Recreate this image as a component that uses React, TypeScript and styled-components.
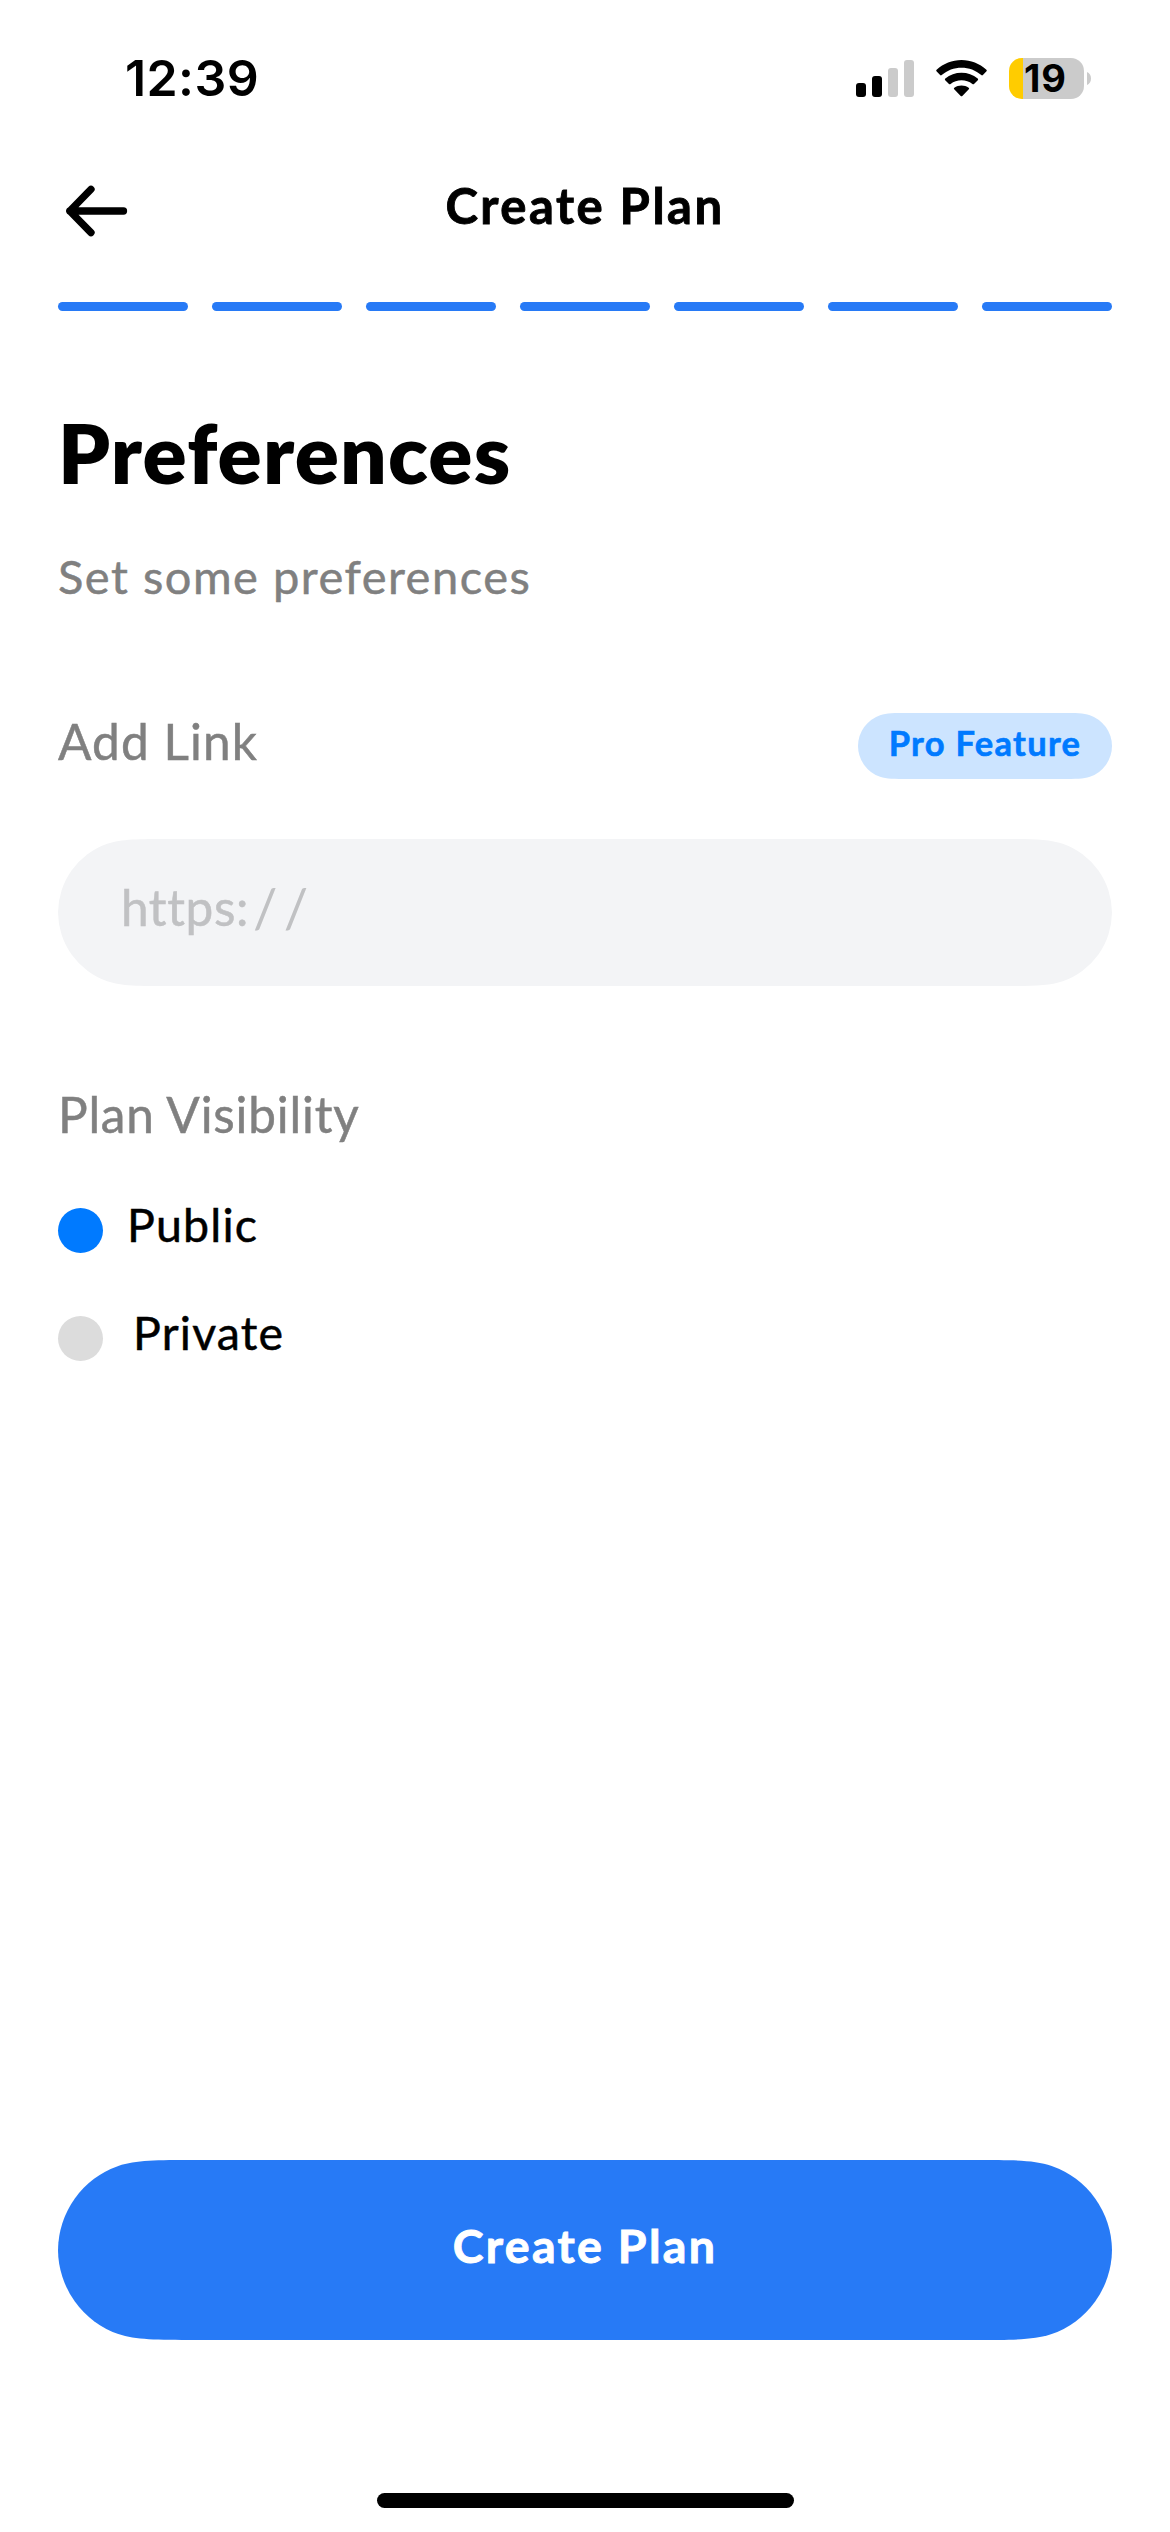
import React, { useState } from "react";
import styled, { createGlobalStyle } from "styled-components";

const BLUE = "#277AF6";
const SYSTEM_BLUE = "#007AFF";
const brandFont = `Lato, "Open Sans", sans-serif`;
const systemFont = `Inter, "Liberation Sans", sans-serif`;

/* Capsule outline with continuous (smoothed) corners. */
const capsule = (w: number, h: number) => {
  const r = h / 2;
  const a = 1.52866 * r;
  const b = 1.08849 * r;
  const c = 0.86841 * r;
  const d = 0.66993 * r;
  const e = 0.06549 * r;
  return `path("M${a} 0 L${w - a} 0 C${w - b} 0 ${w - c} 0 ${w - d} ${e} A${r} ${r} 0 0 1 ${w} ${r} A${r} ${r} 0 0 1 ${w - d} ${h - e} C${w - c} ${h} ${w - b} ${h} ${w - a} ${h} L${a} ${h} C${b} ${h} ${c} ${h} ${d} ${h - e} A${r} ${r} 0 0 1 0 ${r} A${r} ${r} 0 0 1 ${d} ${e} C${c} 0 ${b} 0 ${a} 0 Z")`;
};

const GlobalStyle = createGlobalStyle`
  *, *::before, *::after { box-sizing: border-box; }
  body { margin: 0; background: #fff; }
  button { border: 0; margin: 0; outline: 0; font: inherit; }
`;

const Screen = styled.main`
  width: 1170px;
  height: 2532px;
  display: flex;
  flex-direction: column;
  background: #fff;
  color: #000;
  font-family: ${brandFont};
`;

const StatusBar = styled.div`
  height: 156px;
  padding: 0 79px 0 125px;
  display: flex;
  align-items: center;
  justify-content: space-between;
  font-family: ${systemFont};
`;

const Clock = styled.time`
  font-size: 50px;
  font-weight: 600;
  line-height: 60px;
  letter-spacing: 0.4px;
`;

const StatusIcons = styled.div`
  height: 41px;
  display: flex;
  align-items: center;
  gap: 22px;
`;

const Battery = styled.div`
  display: flex;
  align-items: center;
  gap: 3px;
`;

const BatteryBody = styled.div`
  width: 75px;
  height: 41px;
  border-radius: 13px;
  padding-left: 15px;
  background: linear-gradient(to right, #ffcc00 14px, #cbcbcb 14px);
  font-size: 38px;
  font-weight: 700;
  line-height: 41px;
  letter-spacing: 0.8px;
`;

const NavBar = styled.header`
  height: 146px;
  padding: 19px 58px 0;
  display: grid;
  grid-template-columns: 80px 1fr 80px;
  align-items: start;
`;

const BackButton = styled.button`
  padding: 10px 0 0 7px;
  background: none;
  display: flex;
`;

const NavTitle = styled.div`
  font-size: 49px;
  font-weight: 700;
  line-height: 60px;
  letter-spacing: 2.5px;
  -webkit-text-stroke: 0.9px currentColor;
  text-align: center;
  white-space: nowrap;
`;

const Progress = styled.div`
  margin: 0 58px;
  display: grid;
  grid-template-columns: repeat(7, 1fr);
  gap: 24px;
`;

const Step = styled.span`
  height: 9px;
  border-radius: 4.5px;
  background: ${BLUE};
`;

const Content = styled.section`
  flex: 1;
  padding: 91px 58px 0;
  display: flex;
  flex-direction: column;
`;

const Title = styled.h1`
  margin: 0;
  font-size: 82px;
  font-weight: 800;
  line-height: 100px;
  letter-spacing: 1.2px;
`;

const Subtitle = styled.p`
  margin: 44px 0 0;
  color: #808080;
  font-size: 47px;
  line-height: 60px;
  letter-spacing: 1.5px;
  -webkit-text-stroke: 0.5px currentColor;
`;

const FieldHeader = styled.div`
  margin-top: 107px;
  height: 66px;
  display: flex;
  justify-content: space-between;
`;

const Label = styled.div<{ $lift?: number; $track?: number }>`
  color: #808080;
  font-size: 49.5px;
  line-height: ${(p) => 60 - (p.$lift ?? 0)}px;
  letter-spacing: ${(p) => p.$track ?? 0}px;
  -webkit-text-stroke: 0.5px currentColor;
`;

const Badge = styled.span`
  width: 254px;
  height: 66px;
  padding-bottom: 7px;
  display: flex;
  align-items: center;
  justify-content: center;
  background: #cce4ff;
  clip-path: ${capsule(254, 66)};
  color: ${SYSTEM_BLUE};
  font-size: 34.5px;
  font-weight: 700;
  letter-spacing: 1.3px;
  -webkit-text-stroke: 0.6px currentColor;
`;

const LinkField = styled.div`
  margin-top: 60px;
  height: 147px;
  flex: none;
  padding: 0 63px 11px;
  display: flex;
  align-items: center;
  background: #f3f4f6;
  clip-path: ${capsule(1054, 147)};
  color: #c0c1c3;
  font-size: 49.5px;
  letter-spacing: 0.6px;
  -webkit-text-stroke: 0.5px currentColor;
`;

const Slashes = styled.span`
  padding-left: 4px;
  font-size: 54px;
  font-kerning: none;
  letter-spacing: 6.5px;
  -webkit-text-stroke: 0;
`;

const GroupLabel = styled(Label)`
  margin-top: 98px;
`;

const Options = styled.div`
  margin-top: 64px;
  display: flex;
  flex-direction: column;
  gap: 63px;
`;

const Option = styled.button<{ $gap: number }>`
  height: 45px;
  padding: 0;
  display: flex;
  gap: ${(p) => p.$gap}px;
  background: none;
  color: #000;
  font-size: 46.5px;
  line-height: 32px;
  letter-spacing: 1.2px;
  -webkit-text-stroke: 0.5px currentColor;
  text-align: left;
`;

const Dot = styled.span<{ $on: boolean }>`
  width: 45px;
  height: 45px;
  border-radius: 50%;
  background: ${(p) => (p.$on ? SYSTEM_BLUE : "#dcdcdc")};
`;

const SubmitButton = styled.button`
  margin: 0 58px;
  width: 1054px;
  height: 180px;
  flex: none;
  padding: 0 0 10px;
  background: ${BLUE};
  clip-path: ${capsule(1054, 180)};
  color: #fff;
  font-size: 46.5px;
  font-weight: 700;
  letter-spacing: 2.35px;
  -webkit-text-stroke: 0.9px currentColor;
`;

const HomeArea = styled.footer`
  height: 192px;
  display: flex;
  justify-content: center;
  align-items: flex-end;
  padding: 0 0 24px 1px;
`;

const HomeIndicator = styled.div`
  width: 417px;
  height: 15px;
  border-radius: 7.5px;
  background: #000;
`;

const SignalIcon = () => (
  <svg width="58" height="37" viewBox="0 0 58 37">
    <rect x="0" y="23" width="10" height="14" rx="3" fill="#000" />
    <rect x="16" y="16" width="10" height="21" rx="3" fill="#000" />
    <rect x="32" y="8" width="10" height="29" rx="3" fill="#cbcbcb" />
    <rect x="48" y="0" width="10" height="37" rx="3" fill="#cbcbcb" />
  </svg>
);

const WifiIcon = () => (
  <svg width="51" height="37" viewBox="0 0 51 37">
    <path d="M.5 11.3Q-.2 10.5.6 9.8C7.5 3.4 16.2 0 25.5 0S43.5 3.4 50.4 9.8Q51.2 10.5 50.5 11.3L46.9 15Q46.1 15.8 45.3 15.1C39.8 10.2 32.9 7.7 25.5 7.7S11.2 10.2 5.7 15.1Q4.9 15.8 4.1 15Z" />
    <path d="M9.2 20.2Q8.4 19.4 9.3 18.6C13.9 14.7 19.5 12.7 25.5 12.7S37.1 14.7 41.7 18.6Q42.6 19.4 41.8 20.2L38 24Q37.3 24.7 36.4 24C33.3 21.6 29.5 20.3 25.5 20.3S17.7 21.6 14.6 24Q13.7 24.7 13 24Z" />
    <path d="M18.2 29.2Q17.4 28.4 18.3 27.7C20.4 26.2 22.9 25.4 25.5 25.4S30.6 26.2 32.7 27.7Q33.6 28.4 32.8 29.2L26.3 35.9Q25.5 36.7 24.7 35.9Z" />
  </svg>
);

const BatteryTip = () => (
  <svg width="4" height="13" viewBox="0 0 4 13">
    <path d="M0 0C2.5 1 4 3.5 4 6.5S2.5 12 0 13Z" fill="#cbcbcb" />
  </svg>
);

const ArrowLeft = () => (
  <svg width="64" height="52" viewBox="0 0 64 52" fill="none" stroke="#000" strokeWidth="7.3" strokeLinecap="round" strokeLinejoin="round">
    <path d="M58.5 26H4.8M26 4.3L4.8 26L26 47.6" />
  </svg>
);

const choices = [
  { name: "Public", gap: 24 },
  { name: "Private", gap: 30 },
];

export default function App() {
  const [visibility, setVisibility] = useState("Public");
  return (
    <Screen>
      <GlobalStyle />
      <StatusBar>
        <Clock>12:39</Clock>
        <StatusIcons>
          <SignalIcon />
          <WifiIcon />
          <Battery>
            <BatteryBody>19</BatteryBody>
            <BatteryTip />
          </Battery>
        </StatusIcons>
      </StatusBar>
      <NavBar>
        <BackButton aria-label="Back">
          <ArrowLeft />
        </BackButton>
        <NavTitle>Create Plan</NavTitle>
      </NavBar>
      <Progress>
        {Array.from({ length: 7 }, (_, i) => (
          <Step key={i} />
        ))}
      </Progress>
      <Content>
        <Title>Preferences</Title>
        <Subtitle>Set some preferences</Subtitle>
        <FieldHeader>
          <Label $lift={3} $track={1.1}>Add Link</Label>
          <Badge>Pro Feature</Badge>
        </FieldHeader>
        <LinkField>
          https:<Slashes>//</Slashes>
        </LinkField>
        <GroupLabel $track={0.8}>Plan Visibility</GroupLabel>
        <Options>
          {choices.map((c) => (
            <Option key={c.name} $gap={c.gap} onClick={() => setVisibility(c.name)}>
              <Dot $on={visibility === c.name} />
              {c.name}
            </Option>
          ))}
        </Options>
      </Content>
      <SubmitButton>Create Plan</SubmitButton>
      <HomeArea>
        <HomeIndicator />
      </HomeArea>
    </Screen>
  );
}
